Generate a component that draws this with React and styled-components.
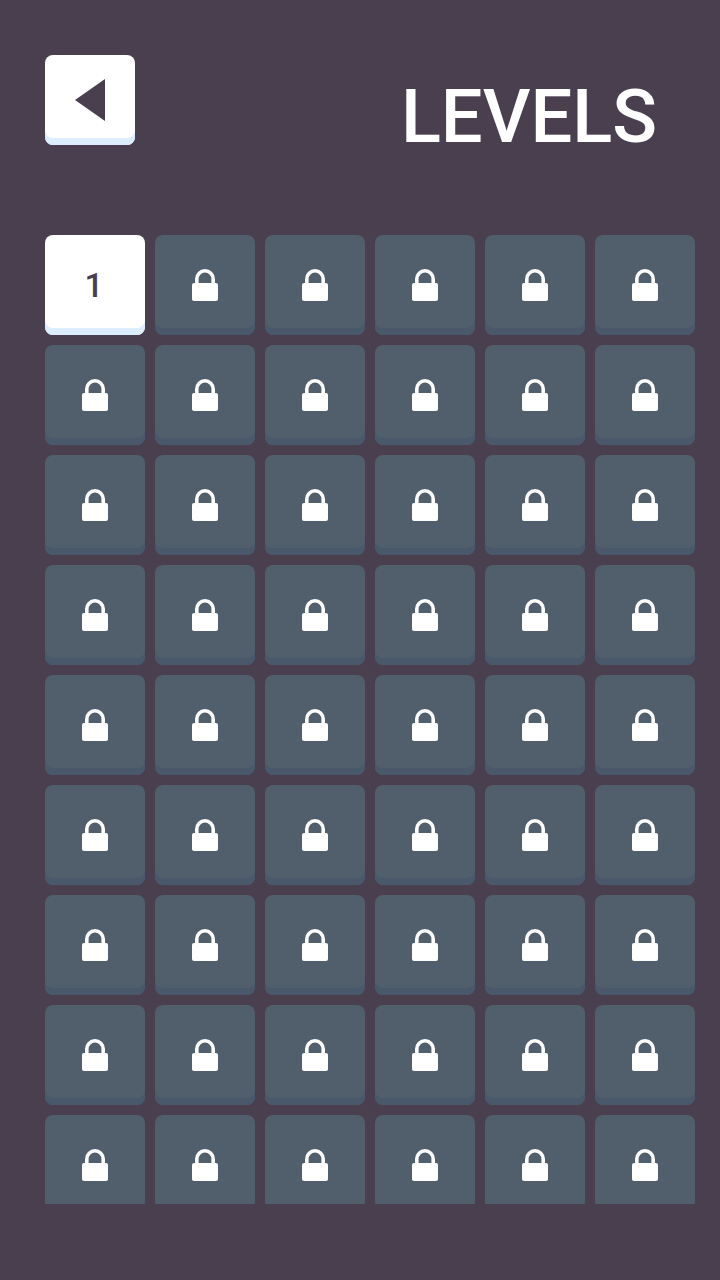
import React from "react";
import styled, { createGlobalStyle } from "styled-components";

const Global = createGlobalStyle`
  html, body { margin: 0; padding: 0; background: #4a3f4e; }
  body { font-family: Roboto, "Liberation Sans", sans-serif; }
`;

const Page = styled.div`
  width: 720px;
  height: 1280px;
  background: #4a3f4e;
  padding: 55px 25px 76px 45px;
  box-sizing: border-box;
  display: flex;
  flex-direction: column;
  overflow: hidden;
`;

const Header = styled.header`
  display: flex;
  justify-content: space-between;
  align-items: flex-start;
  height: 180px;
  flex: none;
`;

const BackButton = styled.button`
  width: 90px;
  height: 90px;
  padding: 0;
  border: 0;
  border-radius: 8px;
  background: #fff;
  box-shadow: inset 0 -7px 0 #dceeff;
  display: flex;
  align-items: center;
  justify-content: center;
`;

const Title = styled.h1`
  margin: 22px 38px 0 0;
  font-family: Roboto, sans-serif;
  font-weight: 500;
  font-size: 74px;
  line-height: 80px;
  color: #fff;
`;

const Grid = styled.div`
  flex: 1;
  min-height: 0;
  overflow: hidden;
  display: grid;
  grid-template-columns: repeat(6, 100px);
  grid-auto-rows: 100px;
  gap: 10px;
`;

const Tile = styled.div`
  width: 100px;
  height: 100px;
  box-sizing: border-box;
  border-radius: 8px;
  display: flex;
  align-items: center;
  justify-content: center;
  background: ${(p) => (p.$open ? "#fff" : "#515e6b")};
  box-shadow: inset 0 -7px 0 ${(p) => (p.$open ? "#dceeff" : "#4a586c")};
`;

const LevelNumber = styled.span`
  font-family: Roboto, sans-serif;
  font-weight: 500;
  font-size: 33px;
  line-height: 1;
  color: #4a3f4e;
  margin-right: 2px;
`;

const BackIcon = () => (
  <svg width="32" height="44" viewBox="0 0 32 44" aria-hidden="true">
    <path d="M1 22 L31 1 V43 Z" fill="#4a3f4e" />
  </svg>
);

const LockIcon = () => (
  <svg width="26" height="32" viewBox="0 0 26 32" aria-hidden="true">
    <path d="M4.8 16 V10 a8.2 8.2 0 0 1 16.4 0 V16" fill="none" stroke="#fff" strokeWidth="3.6" />
    <rect x="0" y="14" width="26" height="18" rx="2" fill="#fff" />
  </svg>
);

const tiles = Array.from({ length: 54 }, (_, i) => i);

export default function App() {
  return (
    <Page>
      <Global />
      <Header>
        <BackButton aria-label="Back">
          <BackIcon />
        </BackButton>
        <Title>LEVELS</Title>
      </Header>
      <Grid>
        {tiles.map((i) =>
          i === 0 ? (
            <Tile key={i} $open>
              <LevelNumber>1</LevelNumber>
            </Tile>
          ) : (
            <Tile key={i}>
              <LockIcon />
            </Tile>
          )
        )}
      </Grid>
    </Page>
  );
}
